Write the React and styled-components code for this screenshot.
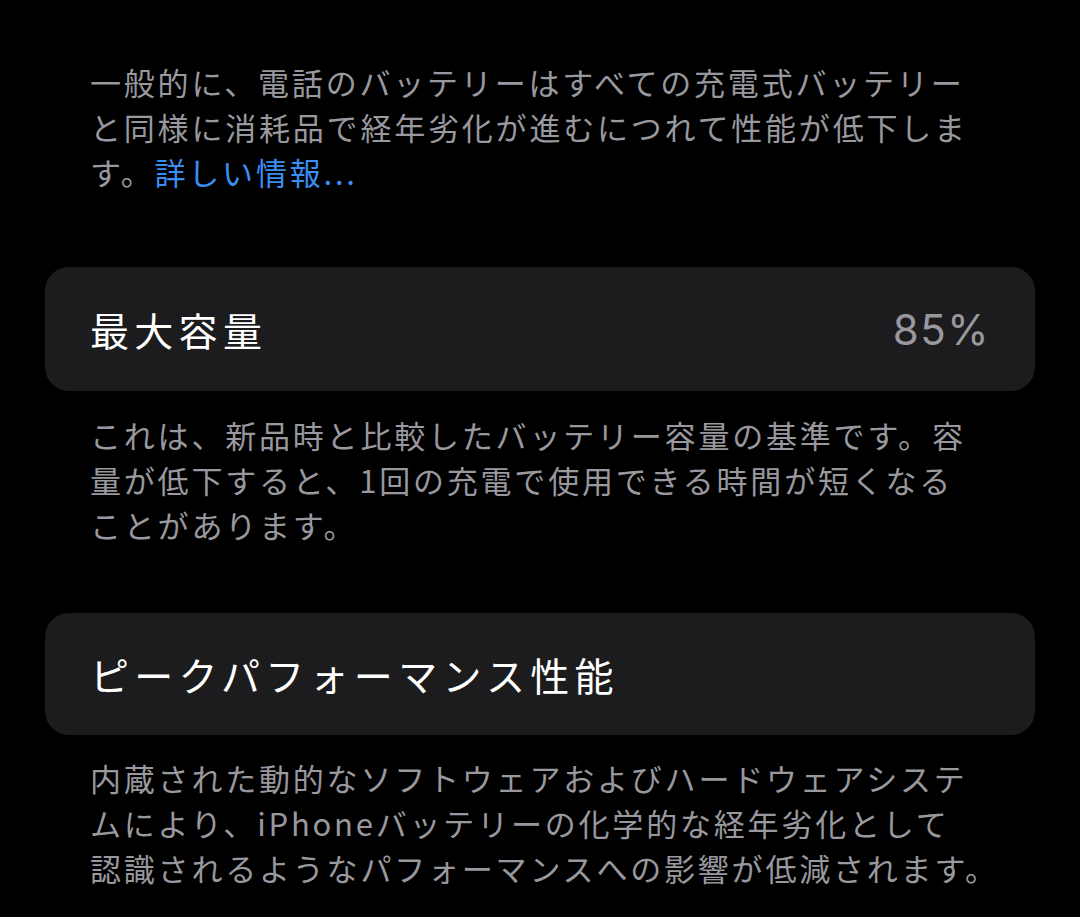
import React from 'react';
import styled, { createGlobalStyle } from 'styled-components';

const GlobalStyle = createGlobalStyle`
  html, body {
    margin: 0;
    padding: 0;
    background: #000;
  }
  body {
    font-family: "Noto Sans CJK JP", "Noto Sans", sans-serif;
    -webkit-font-smoothing: antialiased;
  }
`;

const Page = styled.div`
  min-height: 917px;
  box-sizing: border-box;
  padding: 59px 45px 0;
  background: #000;
  display: flex;
  flex-direction: column;
`;

const Note = styled.p`
  margin: 0 0 ${(props) => props.gap || 0}px;
  padding: 0 45px;
  font-size: 31px;
  line-height: 45px;
  letter-spacing: 2.8px;
  color: #98989e;
  white-space: nowrap;
`;

const Link = styled.a`
  color: #3a8ef2;
  text-decoration: none;
`;

const Card = styled.div`
  height: ${(props) => props.height}px;
  margin-bottom: ${(props) => props.gap}px;
  padding: 0 45px;
  border-radius: 24px;
  background: #1c1c1e;
  display: flex;
  align-items: center;
  justify-content: space-between;
`;

const Label = styled.span`
  font-size: 39px;
  letter-spacing: 5.3px;
  color: #fff;
`;

const Value = styled.span`
  font-family: Inter, "Noto Sans", sans-serif;
  font-size: 42px;
  letter-spacing: 1.5px;
  color: #98989e;
`;

const App = () => {
  return (
    <>
      <GlobalStyle />
      <Page>
        <Note gap={73}>
          一般的に、電話のバッテリーはすべての充電式バッテリー
          <br />
          と同様に消耗品で経年劣化が進むにつれて性能が低下しま
          <br />
          す。<Link href="#">詳しい情報...</Link>
        </Note>

        <Card height={124} gap={21}>
          <Label>最大容量</Label>
          <Value>85%</Value>
        </Card>

        <Note gap={66}>
          これは、新品時と比較したバッテリー容量の基準です。容
          <br />
          量が低下すると、1回の充電で使用できる時間が短くなる
          <br />
          ことがあります。
        </Note>

        <Card height={122} gap={20}>
          <Label>ピークパフォーマンス性能</Label>
        </Card>

        <Note>
          内蔵された動的なソフトウェアおよびハードウェアシステ
          <br />
          ムにより、iPhoneバッテリーの化学的な経年劣化として
          <br />
          認識されるようなパフォーマンスへの影響が低減されます。
        </Note>
      </Page>
    </>
  );
};

export default App;
